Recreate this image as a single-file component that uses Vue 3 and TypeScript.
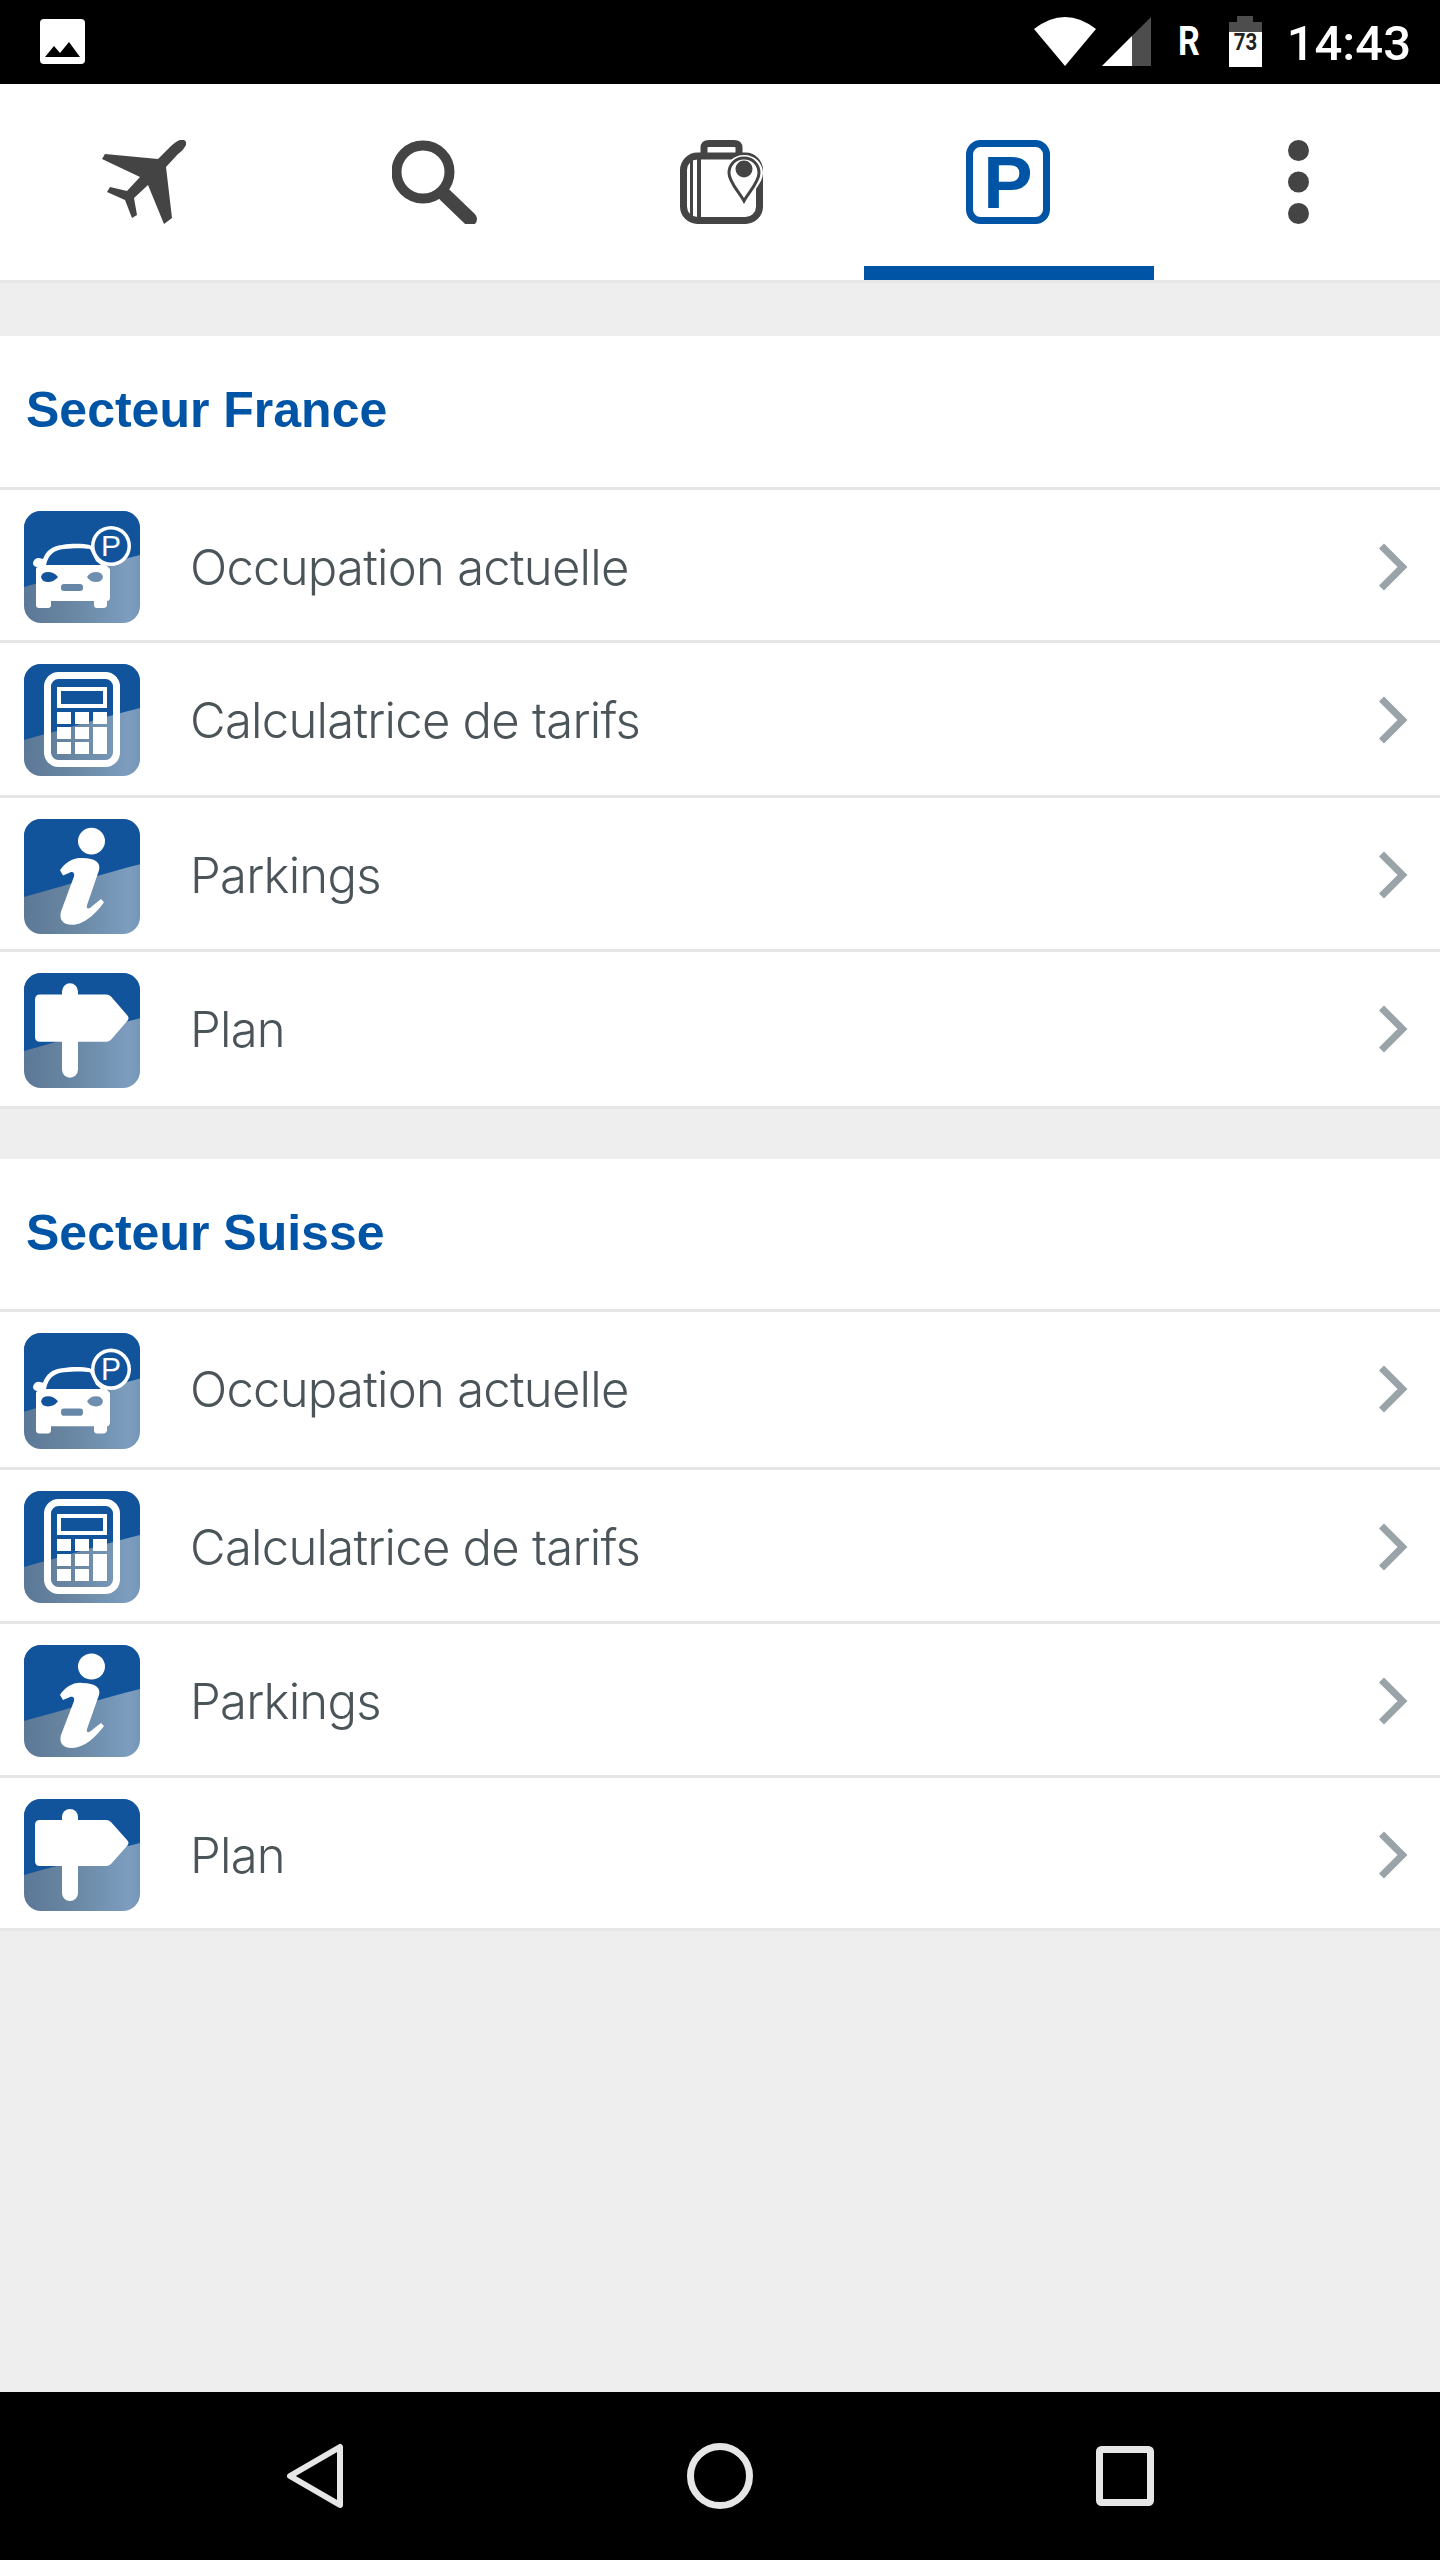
<script setup lang="ts">
type IconKind = 'car' | 'calc' | 'info' | 'sign'

interface Row {
  label: string
  icon: IconKind
  height: number
  tile: number
}

interface Section {
  title: string
  height: number
  rows: Row[]
}

const sections: Section[] = [
  {
    title: 'Secteur France',
    height: 154,
    rows: [
      { label: 'Occupation actuelle', icon: 'car', height: 153, tile: 112 },
      { label: 'Calculatrice de tarifs', icon: 'calc', height: 155, tile: 112 },
      { label: 'Parkings', icon: 'info', height: 154, tile: 115 },
      { label: 'Plan', icon: 'sign', height: 157, tile: 115 },
    ],
  },
  {
    title: 'Secteur Suisse',
    height: 153,
    rows: [
      { label: 'Occupation actuelle', icon: 'car', height: 158, tile: 116 },
      { label: 'Calculatrice de tarifs', icon: 'calc', height: 154, tile: 112 },
      { label: 'Parkings', icon: 'info', height: 154, tile: 112 },
      { label: 'Plan', icon: 'sign', height: 153, tile: 112 },
    ],
  },
]

const keys: [number, number, number, number][] = [
  [33, 48, 14, 12],
  [51, 48, 14, 12],
  [69, 48, 14, 12],
  [33, 63, 14, 12],
  [51, 63, 14, 12],
  [69, 63, 14, 27],
  [33, 78, 14, 12],
  [51, 78, 14, 12],
]
</script>

<template>
  <div class="screen">
    <header class="status">
      <svg class="pic" width="45" height="45" viewBox="0 0 45 45">
        <rect width="45" height="45" rx="4" fill="#fff" />
        <path d="M5 38 L14 27 L20 34 L29 23 L40 38 Z" fill="#000" />
      </svg>
      <div class="status-right">
        <svg class="wifi" width="62" height="49" viewBox="0 0 62 49">
          <path d="M0 12 Q31 -12 62 12 L31 49 Z" fill="#fff" />
        </svg>
        <svg class="signal" width="49" height="49" viewBox="0 0 49 49">
          <path d="M0 49 L49 0 V49 Z" fill="#4d4d4d" />
          <path d="M0 49 L30 19 V49 Z" fill="#fff" />
        </svg>
        <span class="roam">R</span>
        <span class="battery">
          <svg width="33" height="51" viewBox="0 0 33 51">
            <path d="M8 0 H24 V6 H33 V16 H0 V6 H8 Z" fill="#4d4d4d" />
            <rect y="16" width="33" height="35" fill="#fff" />
          </svg>
          <span class="battery-num">73</span>
        </span>
        <span class="clock">14:43</span>
      </div>
    </header>

    <nav class="tabs">
      <div class="tab">
        <svg class="plane" width="84" height="84" viewBox="0 0 84 84">
          <path d="M78 0 C82 -1 85 1 84 5 C82 9 79 12 76 14 L64 27 L70 78 L62 84 L46 45 L32 58 L35 75 L30 78 L23 60 L5 52 L8 47 L25 51 L38 37 L0 19 L3 14 L56 19 L68 7 C71 4 75 1 78 0 Z" fill="#444" />
        </svg>
      </div>
      <div class="tab">
        <svg class="search" width="85" height="84" viewBox="0 0 85 84">
          <circle cx="31" cy="32" r="26.5" fill="none" stroke="#444" stroke-width="10" />
          <path d="M53 55 L78 79" stroke="#444" stroke-width="14" stroke-linecap="round" fill="none" />
        </svg>
      </div>
      <div class="tab">
        <svg class="case" width="83" height="84" viewBox="0 0 83 84">
          <path d="M24 14 V8 Q24 3.500 29 3.500 H54 Q59 3.500 59 8 V14" fill="none" stroke="#444" stroke-width="7" />
          <rect x="3.500" y="16" width="76" height="64.500" rx="14" fill="#fff" stroke="#444" stroke-width="7" />
          <rect x="10" y="18" width="3" height="60" fill="#444" />
          <rect x="17" y="18" width="4" height="60" fill="#444" />
          <path d="M64 15 C53 15 46 23 46 33 C46 43 57 54 64 65 C71 54 83 43 83 33 C83 23 75 15 64 15 Z" fill="#fff" />
          <path d="M64 18 C55 18 49 25 49 33 C49 42 59 52 64 61 C69 52 79 42 79 33 C79 25 73 18 64 18 Z" fill="#fff" stroke="#444" stroke-width="3" />
          <circle cx="64" cy="29" r="8.500" fill="#444" />
        </svg>
      </div>
      <div class="tab active">
        <svg class="parking" width="84" height="84" viewBox="0 0 84 84">
          <rect x="3.500" y="3.500" width="77" height="77" rx="11" fill="none" stroke="#0054a5" stroke-width="7" />
          <text x="42" y="68" text-anchor="middle" class="parking-p">P</text>
        </svg>
        <span class="indicator"></span>
      </div>
      <div class="tab">
        <svg class="dots" width="21" height="84" viewBox="0 0 21 84">
          <circle cx="10.500" cy="10.500" r="10.500" fill="#444" />
          <circle cx="10.500" cy="42" r="10.500" fill="#444" />
          <circle cx="10.500" cy="73.500" r="10.500" fill="#444" />
        </svg>
      </div>
    </nav>

    <main class="content">
      <section v-for="section in sections" :key="section.title" class="section">
        <h2 class="section-title" :style="{ height: section.height + 'px' }">{{ section.title }}</h2>
        <a v-for="row in section.rows" :key="row.label" class="row" :style="{ height: row.height + 'px' }">
          <div class="tile" :style="{ height: row.tile + 'px' }">
            <svg width="116" :height="row.tile" viewBox="0 0 116 112" preserveAspectRatio="none">
              <path d="M0 0 H116 V44 C80 53 40 65 0 76 Z" fill="#12549c" />
              <g v-if="row.icon === 'car'">
                <path d="M9 52 Q10 47 15 47 L19 48 C22 40 28 35 38 34 C50 32 60 33 66 34 L72 40 L80 52 L86 58 V86 Q86 90 83 90 V94 Q83 97 79 97 H73 Q70 97 70 94 V90 H27 V94 Q27 97 24 97 H15 Q12 97 12 94 V58 Q12 56 14 56 Q9 56 9 52 Z" fill="#fff" />
                <path d="M22 54 C24 44 30 39 40 38 C50 37 60 37 66 38 L72 50 L77 54 Z" fill="#12549c" />
                <path d="M17 66 Q18 61 24 61 Q30 61 34 66 Q30 71 24 71 Q18 71 17 66 Z" fill="#12549c" />
                <path d="M79 66 Q78 61 72 61 Q66 61 63 66 Q66 71 72 71 Q78 71 79 66 Z" fill="#6f8fb0" />
                <rect x="37" y="73" width="22" height="7" rx="3" fill="#6787a8" />
                <circle cx="87" cy="35" r="20" fill="#fff" />
                <circle cx="87" cy="35" r="16.500" fill="#12549c" />
                <text x="87" y="45" text-anchor="middle" class="tile-p">P</text>
              </g>
              <g v-else-if="row.icon === 'calc'">
                <rect x="23.500" y="11.500" width="69" height="88" rx="11" fill="none" stroke="#fff" stroke-width="7" />
                <rect x="35" y="25" width="46" height="17" fill="none" stroke="#fff" stroke-width="4" />
                <rect v-for="(k, i) in keys" :key="i" :x="k[0]" :y="k[1]" :width="k[2]" :height="k[3]" fill="#fff" />
              </g>
              <g v-else-if="row.icon === 'info'">
                <ellipse cx="67.500" cy="21.500" rx="13.500" ry="13" fill="#fff" />
                <path d="M36 50 C41 42 50 37 58 38 C72 38 77 43 75 50 L63 84 C62 88 65 88 68 85 L77 78 L80 81 C72 92 60 103 48 103 C38 103 35 97 37 90 L50 56 C51 52 48 51 46 52 L39 55 Z" fill="#fff" />
              </g>
              <g v-else>
                <rect x="38" y="10" width="16" height="92" rx="8" fill="#fff" />
                <path d="M16 21 H82 Q85 21 87 23 L103 41 Q106 44 103 47 L87 65 Q85 67 82 67 H16 Q11 67 11 62 V26 Q11 21 16 21 Z" fill="#fff" />
              </g>
            </svg>
          </div>
          <span class="row-label">{{ row.label }}</span>
          <span class="chevron">
            <svg width="30" height="48" viewBox="0 0 30 48">
              <path d="M3.500 3 L24.500 24 L3.500 45" fill="none" stroke="#99a3a8" stroke-width="7" />
            </svg>
          </span>
        </a>
      </section>
    </main>

    <footer class="sysnav">
      <div class="sysnav-item">
        <svg width="58" height="66" viewBox="0 0 58 66">
          <path d="M54 4 V62 L4 33 Z" fill="none" stroke="#e6e6e6" stroke-width="6" stroke-linejoin="round" />
        </svg>
      </div>
      <div class="sysnav-item">
        <svg width="66" height="66" viewBox="0 0 66 66">
          <circle cx="33" cy="33" r="29.500" fill="none" stroke="#e6e6e6" stroke-width="7" />
        </svg>
      </div>
      <div class="sysnav-item">
        <svg width="58" height="60" viewBox="0 0 58 60">
          <rect x="3.500" y="3.500" width="51" height="53" rx="2" fill="none" stroke="#e6e6e6" stroke-width="7" />
        </svg>
      </div>
    </footer>
  </div>
</template>

<style scoped>
.screen {
  width: 1440px;
  height: 2560px;
  display: flex;
  flex-direction: column;
  background: #eeeeee;
  font-family: Roboto, "Liberation Sans", sans-serif;
  overflow: hidden;
}

.status {
  height: 84px;
  flex: none;
  background: #000;
  display: flex;
  align-items: center;
  justify-content: space-between;
  padding: 0 29px 0 40px;
  box-sizing: border-box;
  color: #fff;
}

.pic {
  display: block;
  margin-top: -1px;
}

.status-right {
  display: flex;
  align-items: center;
}

.wifi,
.signal {
  display: block;
  margin-top: -1px;
}

.signal {
  margin-left: 6px;
}

.roam {
  margin-left: 25px;
  font-size: 40px;
  line-height: 84px;
  font-weight: 700;
  transform: scaleX(0.85);
}

.battery {
  position: relative;
  margin-left: 27px;
  width: 33px;
  height: 51px;
  margin-top: -1px;
}

.battery svg {
  display: block;
}

.battery-num {
  position: absolute;
  left: 0;
  right: 0;
  top: 14px;
  text-align: center;
  font-size: 24px;
  line-height: 24px;
  font-weight: 700;
  color: #222;
  transform: scaleX(0.85);
}

.clock {
  margin-left: 25px;
  font-size: 49px;
  line-height: 84px;
  font-weight: 500;
  padding-top: 4px;
}

.tabs {
  height: 199px;
  flex: none;
  box-sizing: border-box;
  display: flex;
  background: #fff;
  border-bottom: 3px solid #e6e6e6;
}

.tab {
  position: relative;
  flex: 1;
  display: flex;
  align-items: center;
  justify-content: center;
}

.search,
.dots {
  margin-left: 5px;
}

.case {
  margin-left: 2px;
}

.indicator {
  position: absolute;
  left: 0;
  bottom: 0;
  width: 290px;
  height: 14px;
  background: #0054a5;
}

.parking-p {
  font-family: "Liberation Sans", sans-serif;
  font-weight: 700;
  font-size: 74px;
  fill: #0054a5;
}

.content {
  flex: 1;
  padding-top: 53px;
}

.section {
  margin-bottom: 50px;
  background: #fff;
}

.section-title {
  margin: 0;
  padding: 0 0 3px 26px;
  box-sizing: border-box;
  display: flex;
  align-items: center;
  border-bottom: 3px solid #e6e6e6;
  font-family: "Liberation Sans", Arial, sans-serif;
  font-size: 50px;
  font-weight: 700;
  color: #0054a5;
}

.row {
  display: flex;
  align-items: flex-start;
  box-sizing: border-box;
  padding: 21px 32px 0 24px;
  border-bottom: 3px solid #e6e6e6;
}

.tile {
  flex: none;
  width: 116px;
  border-radius: 17px;
  overflow: hidden;
  background: linear-gradient(90deg, #5c7898 0%, #67849f 35%, #7596b6 75%, #7e9dbe 90%, #7396b8 100%);
}

.tile svg {
  display: block;
}

.tile-p {
  font-family: "Liberation Sans", sans-serif;
  font-size: 30px;
  font-weight: 400;
  fill: #fff;
}

.row-label {
  flex: 1;
  margin-left: 50px;
  height: 112px;
  line-height: 114px;
  font-family: Inter, Roboto, sans-serif;
  font-size: 49px;
  font-weight: 300;
  letter-spacing: -0.75px;
  color: #4a5459;
}

.chevron {
  height: 112px;
  display: flex;
  align-items: center;
}

.sysnav {
  height: 168px;
  flex: none;
  background: #000;
  display: grid;
  grid-template-columns: repeat(3, 405px);
  justify-content: center;
  align-items: center;
}

.sysnav-item {
  display: flex;
  justify-content: center;
}
</style>
